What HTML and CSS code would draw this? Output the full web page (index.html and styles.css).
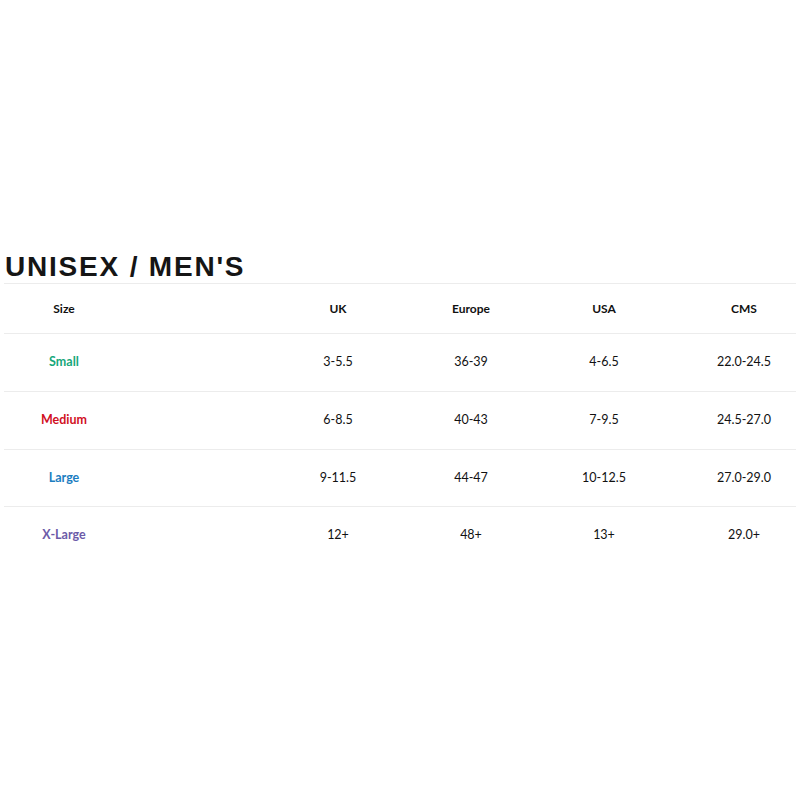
FILE: index.html
```html
<!DOCTYPE html>
<html>
<head>
<meta charset="utf-8">
<link rel="stylesheet" href="styles.css">
</head>
<body>
<div class="chart">
  <h1 class="title">UNISEX / MEN'S</h1>
  <div class="grid head">
    <div class="cell">Size</div><div></div>
    <div class="cell">UK</div>
    <div class="cell">Europe</div>
    <div class="cell">USA</div>
    <div class="cell cms">CMS</div>
  </div>
  <div class="grid row">
    <div class="cell size small">Small</div><div></div>
    <div class="cell">3-5.5</div>
    <div class="cell">36-39</div>
    <div class="cell">4-6.5</div>
    <div class="cell cms">22.0-24.5</div>
  </div>
  <div class="grid row">
    <div class="cell size medium">Medium</div><div></div>
    <div class="cell">6-8.5</div>
    <div class="cell">40-43</div>
    <div class="cell">7-9.5</div>
    <div class="cell cms">24.5-27.0</div>
  </div>
  <div class="grid row">
    <div class="cell size large">Large</div><div></div>
    <div class="cell">9-11.5</div>
    <div class="cell">44-47</div>
    <div class="cell">10-12.5</div>
    <div class="cell cms">27.0-29.0</div>
  </div>
  <div class="grid row last">
    <div class="cell size xlarge">X-Large</div><div></div>
    <div class="cell">12+</div>
    <div class="cell">48+</div>
    <div class="cell">13+</div>
    <div class="cell cms">29.0+</div>
  </div>
</div>
</body>
</html>
```
FILE: styles.css
```css
html, body {
  margin: 0;
  padding: 0;
  background: #fff;
}
.chart {
  padding: 250px 4px 0 4px;
  width: 792px;
  font-family: "Lato", "Liberation Sans", sans-serif;
  color: #111;
}
.title {
  margin: 0;
  padding-left: 1px;
  font-family: "Liberation Sans", sans-serif;
  font-weight: bold;
  font-size: 28px;
  line-height: 33px;
  letter-spacing: 1.8px;
  color: #151515;
  border-bottom: 1px solid #ececec;
}
.grid {
  display: grid;
  grid-template-columns: 120px 148px 132px 134px 132px 126px;
  align-items: center;
  border-bottom: 1px solid #ececec;
}
.head {
  height: 49px;
  font-weight: bold;
  font-size: 12px;
}
.row {
  font-size: 12.5px;
  padding-bottom: 3px;
  height: 54px;
}
.row.last {
  border-bottom: none;
}
.row:nth-child(5) {
  padding-bottom: 2px;
  height: 54px;
}
.cell {
  text-align: center;
}
.cms {
  padding-left: 22px;
}
.size {
  font-weight: bold;
  font-size: 12.5px;
}
.small { color: #16a77a; }
.medium { color: #d1111f; }
.large { color: #1b7dc1; }
.xlarge { color: #6c5ba8; }
```
